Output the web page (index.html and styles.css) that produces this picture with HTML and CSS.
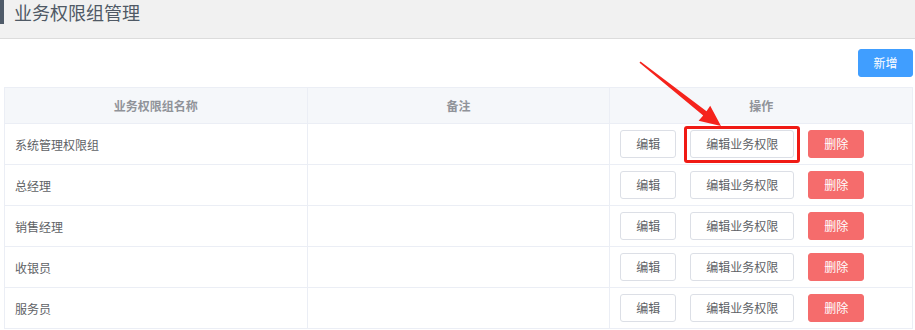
FILE: index.html
```html
<!DOCTYPE html>
<html lang="zh-CN">
<head>
<meta charset="UTF-8">
<title>业务权限组管理</title>
<link rel="stylesheet" href="styles.css">
</head>
<body>
<div class="page-head">
  <h1>业务权限组管理</h1>
</div>

<div class="content">
  <div class="toolbar">
    <button class="btn btn-primary">新增</button>
  </div>

  <table>
    <thead>
      <tr><th>业务权限组名称</th><th>备注</th><th>操作</th></tr>
    </thead>
    <tbody>
      <tr>
        <td>系统管理权限组</td><td></td>
        <td><div class="ops"><button class="btn">编辑</button><button class="btn btn-wide highlight">编辑业务权限</button><button class="btn btn-danger">删除</button></div></td>
      </tr>
      <tr>
        <td>总经理</td><td></td>
        <td><div class="ops"><button class="btn">编辑</button><button class="btn btn-wide">编辑业务权限</button><button class="btn btn-danger">删除</button></div></td>
      </tr>
      <tr>
        <td>销售经理</td><td></td>
        <td><div class="ops"><button class="btn">编辑</button><button class="btn btn-wide">编辑业务权限</button><button class="btn btn-danger">删除</button></div></td>
      </tr>
      <tr>
        <td>收银员</td><td></td>
        <td><div class="ops"><button class="btn">编辑</button><button class="btn btn-wide">编辑业务权限</button><button class="btn btn-danger">删除</button></div></td>
      </tr>
      <tr>
        <td>服务员</td><td></td>
        <td><div class="ops"><button class="btn">编辑</button><button class="btn btn-wide">编辑业务权限</button><button class="btn btn-danger">删除</button></div></td>
      </tr>
    </tbody>
  </table>
</div>

<!-- 标注箭头 -->
<svg class="arrow" width="915" height="330" viewBox="0 0 915 330">
  <path d="M640.5 61.5 L706.5 111.2 L710.2 105.8 L721 126 L698.6 120.8 L703.2 115.6 L639.5 62.8 Z" fill="#f5231c"/>
</svg>
</body>
</html>
```

FILE: styles.css
```css
body {
  margin: 0;
  font-family: "Noto Sans CJK SC", "Liberation Sans", sans-serif;
  font-size: 12px;
  color: #606266;
  background: #fff;
}

/* ページ見出し */
.page-head {
  height: 38px;
  background: #f1f1f1;
  border-bottom: 1px solid #dcdcdc;
}

.page-head h1 {
  margin: 0;
  height: 24px;
  line-height: 24px;
  padding-left: 10px;
  border-left: 4px solid #4f5b69;
  font-size: 18px;
  font-weight: normal;
  color: #4f5965;
}

.content {
  margin: 0 2px 0 4px;
}

.toolbar {
  display: flex;
  justify-content: flex-end;
  padding: 10px 0;
}

.btn {
  height: 28px;
  padding: 0;
  width: 56px;
  border: 1px solid #dcdfe6;
  border-radius: 3px;
  background: #fff;
  color: #606266;
  font-family: inherit;
  font-size: 12px;
  line-height: 26px;
}

.btn-primary {
  width: 55px;
  border-color: #409eff;
  background: #409eff;
  color: #fff;
}

.btn-wide {
  width: 104px;
}

.btn-danger {
  border-color: #f56c6c;
  background: #f56c6c;
  color: #fff;
}

.highlight {
  position: relative;
}

.highlight::after {
  content: "";
  position: absolute;
  left: -7px;
  right: -7px;
  top: -5px;
  bottom: -6px;
  border: 3px solid #f01a14;
  border-radius: 3px;
}

table {
  width: 100%;
  border-collapse: collapse;
  table-layout: fixed;
}

th, td {
  border: 1px solid #ebeef5;
  text-align: left;
  box-sizing: border-box;
}

thead tr {
  height: 36px;
}

tbody tr {
  height: 41px;
}

th {
  padding: 0;
  background: #f5f7fa;
  color: #909399;
  font-weight: bold;
  text-align: center;
}

td {
  padding: 0 10px;
}

.ops {
  display: flex;
  align-items: center;
  gap: 14px;
}

.arrow {
  position: absolute;
  left: 0;
  top: 0;
  pointer-events: none;
}
```
